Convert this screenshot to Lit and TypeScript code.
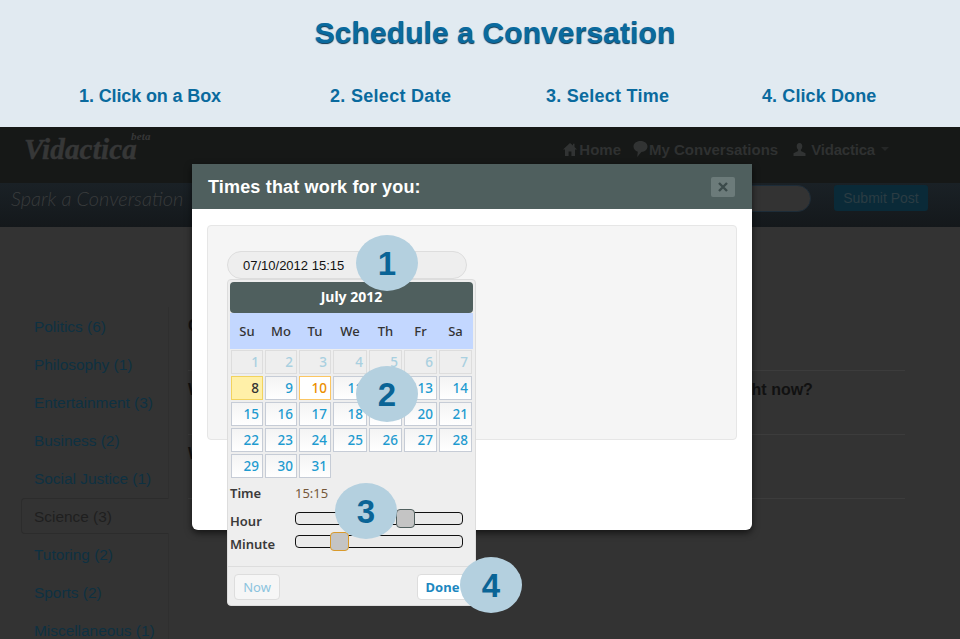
import { LitElement, html, css, svg } from "lit";
import { customElement } from "lit/decorators.js";
import { classMap } from "lit/directives/class-map.js";

const topics = [
  "Politics (6)",
  "Philosophy (1)",
  "Entertainment (3)",
  "Business (2)",
  "Social Justice (1)",
  "Science (3)",
  "Tutoring (2)",
  "Sports (2)",
  "Miscellaneous (1)",
];

const posts = [
  "Could we ever live on another planet?",
  "What do you think is the most urgent question about the world we face right now?",
  "What would you change about school?",
];

const weekdays = ["Su", "Mo", "Tu", "We", "Th", "Fr", "Sa"];

const homeIcon = svg`<path d="M7 1 0 7.5h2V14h3.6V9.5h2.8V14H12V7.5h2L11.5 5V1.8H10v1.8z" />`;
const chatIcon = svg`<path d="M7.5 0C3.4 0 .5 2.3.5 5.6c0 2.6 1.8 4.5 4.3 5.2L4.2 16l4.2-4.9c3.5-.3 6.1-2.6 6.1-5.5C14.500 2.300 11.600 0 7.500 0z" />`;
const userIcon = svg`<path d="M6.500 0C4.600 0 3.700 1.400 3.700 3.200c0 1.500.6 2.800 1.400 3.500v1.400L.5 10.200V13h12v-2.800L7.900 8.100V6.700c.8-.7 1.400-2 1.400-3.500C9.300 1.400 8.400 0 6.500 0z" />`;

@customElement("app-root")
export class AppRoot extends LitElement {
  static styles = css`
    :host {
      display: block;
      font-family: "Liberation Sans", Arial, sans-serif;
    }
    .screen {
      position: relative;
      height: 639px;
      overflow: hidden;
      background: #333;
    }

    .banner {
      height: 127px;
      box-sizing: border-box;
      background: #e1eaf1;
      color: #0a6a9e;
      padding-top: 16px;
    }
    .banner h1 {
      margin: 0;
      padding-left: 30px;
      font-size: 30px;
      line-height: 34px;
      font-weight: 700;
      letter-spacing: 0.1px;
      text-align: center;
      text-shadow: 0 1px 1px #0a3550;
    }
    .steps {
      display: grid;
      grid-template-columns: 251px 216px 216px auto;
      padding: 34px 0 0 79px;
      font-size: 18px;
      line-height: 24px;
      font-weight: 700;
    }
    .steps span:nth-child(1) {
      letter-spacing: -0.12px;
    }
    .steps span:nth-child(2) {
      letter-spacing: 0.3px;
    }
    .steps span:nth-child(3) {
      letter-spacing: 0.25px;
    }
    .steps span:nth-child(4) {
      letter-spacing: 0.1px;
    }

    .nav {
      height: 56px;
      box-sizing: border-box;
      padding-bottom: 12px;
      background: #161817;
      display: flex;
      align-items: center;
      color: #2f3131;
      font-size: 15px;
      font-weight: 700;
    }
    .logo {
      margin-left: 24px;
      font-family: "Liberation Serif", serif;
      font-size: 29px;
      font-style: italic;
      letter-spacing: 0.2px;
      color: #363737;
      -webkit-text-stroke: 0.5px #363737;
      position: relative;
    }
    .logo sup {
      position: absolute;
      left: 107px;
      top: -3px;
      font-size: 11px;
      line-height: 12px;
      -webkit-text-stroke: 0;
    }
    .links {
      margin-left: auto;
      margin-right: 71px;
      display: flex;
      align-items: center;
    }
    .links a {
      display: flex;
      align-items: center;
      margin-left: 15px;
    }
    .links svg {
      fill: #313333;
    }
    .caret {
      margin-left: 6px;
      border: 4px solid transparent;
      border-top-color: #252727;
      border-bottom: 0;
    }

    .sub {
      height: 44px;
      box-sizing: border-box;
      padding-bottom: 14px;
      background: linear-gradient(#1a2126, #14181b);
      display: flex;
      align-items: center;
    }
    .spark {
      margin-left: 11px;
      font-family: Lato, sans-serif;
      font-weight: 300;
      font-style: italic;
      font-size: 20px;
      color: #383b3c;
    }
    .search {
      margin-left: auto;
      width: 140px;
      height: 27px;
      box-sizing: border-box;
      border-radius: 14px;
      background: #333;
      border: 1px solid #1d2c38;
    }
    .submit {
      margin: 0 32px 0 23px;
      width: 94px;
      height: 26px;
      box-sizing: border-box;
      border-radius: 3px;
      background: #0a2a38;
      color: #2b3c43;
      font-size: 14px;
      line-height: 26px;
      text-align: center;
    }

    .main {
      display: flex;
      padding: 80px 55px 0 21px;
    }
    .topics {
      flex: 0 0 147px;
      height: 340px;
      border-right: 1px solid #2f2f2f;
      font-size: 15.4px;
    }
    .topic {
      height: 38px;
      box-sizing: border-box;
      padding-left: 13px;
      line-height: 39px;
      color: #0e3142;
      white-space: nowrap;
    }
    .topic.active {
      height: 36px;
      margin: 1px -1px 1px 0;
      padding-left: 12px;
      line-height: 35px;
      color: #1f1f1f;
      background: #333;
      border: 1px solid #2c2c2c;
      border-right-color: #333;
      border-radius: 4px 0 0 4px;
    }
    .posts {
      flex: 1;
      margin-left: 19px;
    }
    .post {
      height: 64px;
      box-sizing: border-box;
      border-bottom: 1px solid #3c3c3c;
      padding-top: 10px;
      font-size: 16px;
      font-weight: 700;
      line-height: 18px;
      color: #111;
      white-space: nowrap;
    }

    .modal {
      position: absolute;
      left: 192px;
      top: 164px;
      width: 560px;
      height: 366px;
      background: #fff;
      border-radius: 0 0 6px 6px;
      box-shadow: 0 3px 7px rgba(0, 0, 0, 0.6);
    }
    .modal header {
      height: 45px;
      box-sizing: border-box;
      background: #4f5f5e;
      display: flex;
      align-items: center;
      justify-content: space-between;
      padding: 0 17px 0 16px;
      color: #fff;
      font-size: 18px;
      font-weight: 700;
      letter-spacing: 0.17px;
    }
    .modal header span {
      padding-top: 2px;
    }
    .close {
      width: 24px;
      height: 20px;
      border-radius: 2px;
      background: #6c7b7a;
      display: flex;
      align-items: center;
      justify-content: center;
    }
    .well {
      margin: 16px 15px;
      height: 215px;
      box-sizing: border-box;
      background: #f5f5f5;
      border: 1px solid #e6e6e6;
      border-radius: 4px;
      padding: 25px 19px;
    }
    .field {
      width: 240px;
      height: 28px;
      box-sizing: border-box;
      border: 1px solid #ddd;
      border-radius: 14px;
      background: #eee;
      padding-left: 15px;
      font-size: 13px;
      line-height: 27px;
      color: #111;
    }

    .picker {
      position: absolute;
      left: 35px;
      top: 115px;
      width: 249px;
      height: 327px;
      box-sizing: border-box;
      padding: 2px;
      background: #eee;
      border: 1px solid #ddd;
      border-radius: 4px;
      font-family: "Noto Sans", "Open Sans", sans-serif;
    }
    .month {
      height: 31px;
      background: #4f5f5e;
      border-radius: 4px;
      color: #fff;
      font-size: 14px;
      font-weight: 700;
      line-height: 30px;
      text-align: center;
    }
    .dow {
      height: 36px;
      background: #c3d7ff;
      padding-left: 1px;
      color: #333;
      font-size: 13px;
      font-weight: 500;
      line-height: 36px;
      text-align: center;
    }
    .dow,
    .days {
      display: grid;
      grid-template-columns: 32px 32px 32px 34px 33px 33px 33px;
      column-gap: 2px;
    }
    .days {
      padding: 1px 0 0 1px;
      row-gap: 2px;
    }
    .day {
      height: 24px;
      box-sizing: border-box;
      padding-right: 3px;
      border: 1px solid #c6ccd6;
      background: linear-gradient(#f4f4f4, #fff);
      color: #1f9bd0;
      font-size: 13.5px;
      font-weight: 500;
      line-height: 22px;
      text-align: right;
    }
    .day.off {
      background: #eee;
      border-color: #ddd;
      color: #a9d0e0;
    }
    .day.today {
      background: #fff0a8;
      border-color: #f2d35e;
      color: #333;
    }
    .day.sel {
      background: #fff;
      border-color: #fbc663;
      color: #eb8f00;
    }
    .time {
      display: grid;
      grid-template-columns: 65px 168px;
      align-items: center;
      font-size: 13px;
      color: #3a3a3a;
    }
    .time b {
      font-weight: 600;
    }
    .time.now {
      margin-top: 5px;
      line-height: 20px;
    }
    .time.now span {
      color: #75583a;
      font-size: 13px;
    }
    .time.hour {
      margin-top: 6px;
      height: 23px;
    }
    .time.minute {
      height: 23px;
    }
    .track {
      position: relative;
      height: 13px;
      margin-bottom: 5px;
      box-sizing: border-box;
      border: 1px solid #111;
      border-radius: 4px;
      background: #eaeaea;
    }
    .thumb {
      position: absolute;
      top: -4px;
      width: 19px;
      height: 19px;
      box-sizing: border-box;
      border: 1px solid #51605f;
      border-radius: 4px;
      background: #c4c4c4;
    }
    .thumb.focus {
      border-color: #d99a2b;
    }
    .foot {
      margin: 11px -2px 0;
      border-top: 1px solid #ddd;
      padding: 7px 6px 0;
      display: flex;
      justify-content: space-between;
    }
    .btn {
      height: 26px;
      box-sizing: border-box;
      border: 1px solid #ddd;
      border-radius: 4px;
      background: #f6f6f6;
      font-size: 13px;
      line-height: 24px;
      text-align: center;
    }
    .btn.now {
      width: 46px;
      color: #8cc4de;
    }
    .btn.done {
      width: 61px;
      margin-right: -9px;
      padding-right: 10px;
      background: #fff;
      color: #1c87c0;
      font-weight: 700;
    }

    .mark {
      position: absolute;
      width: 62px;
      height: 56px;
      border-radius: 50%;
      background: #b4d0df;
      color: #0a6496;
      font-size: 33px;
      font-weight: 700;
      line-height: 57px;
      text-align: center;
    }
  `;

  private day(n: number) {
    return html`<div
      class=${classMap({ day: true, off: n < 8, today: n === 8, sel: n === 10 })}
    >
      ${n}
    </div>`;
  }

  private mark(n: number, x: number, y: number) {
    return html`<div class="mark" style="left:${x}px;top:${y}px">${n}</div>`;
  }

  render() {
    const days = Array.from({ length: 31 }, (_, i) => i + 1);
    return html`
      <div class="screen">
        <section class="banner">
          <h1>Schedule a Conversation</h1>
          <div class="steps">
            <span>1. Click on a Box</span>
            <span>2. Select Date</span>
            <span>3. Select Time</span>
            <span>4. Click Done</span>
          </div>
        </section>

        <nav class="nav">
          <div class="logo"><b>Vidactica</b><sup><b>beta</b></sup></div>
          <div class="links">
            <a>
              <svg width="14" height="14" viewBox="0 0 14 14">${homeIcon}</svg>
              <span style="margin-left:2px">Home</span>
            </a>
            <a style="margin-left:12px">
              <svg width="15" height="16" viewBox="0 0 15 16">${chatIcon}</svg>
              <span style="margin-left:1px">My Conversations</span>
            </a>
            <a>
              <svg width="13" height="13" viewBox="0 0 13 13">${userIcon}</svg>
              <span style="margin-left:5px;letter-spacing:-0.2px">Vidactica</span>
              <i class="caret"></i>
            </a>
          </div>
        </nav>

        <div class="sub">
          <span class="spark">Spark a Conversation</span>
          <div class="search"></div>
          <div class="submit">Submit Post</div>
        </div>

        <div class="main">
          <div class="topics">
            ${topics.map(
              (t) =>
                html`<div class=${classMap({ topic: true, active: t.startsWith("Science") })}>
                  ${t}
                </div>`
            )}
          </div>
          <div class="posts">
            ${posts.map((p) => html`<div class="post">${p}</div>`)}
          </div>
        </div>

        <div class="modal">
          <header>
            <span>Times that work for you:</span>
            <div class="close">
              <svg width="10" height="10" viewBox="0 0 10 10">
                <path d="M1 1l8 8M9 1l-8 8" stroke="#3b4a4a" stroke-width="2.400" fill="none" />
              </svg>
            </div>
          </header>
          <div class="well">
            <div class="field">07/10/2012 15:15</div>
          </div>

          <div class="picker">
            <div class="month">July 2012</div>
            <div class="dow">${weekdays.map((d) => html`<span>${d}</span>`)}</div>
            <div class="days">${days.map((n) => this.day(n))}</div>
            <div class="time now"><b>Time</b><span>15:15</span></div>
            <div class="time hour">
              <b>Hour</b>
              <div class="track"><div class="thumb" style="left:100px"></div></div>
            </div>
            <div class="time minute">
              <b>Minute</b>
              <div class="track"><div class="thumb focus" style="left:34px"></div></div>
            </div>
            <div class="foot">
              <div class="btn now">Now</div>
              <div class="btn done">Done</div>
            </div>
          </div>
        </div>

        ${this.mark(1, 356, 235)} ${this.mark(2, 356, 366)} ${this.mark(3, 335, 483)}
        ${this.mark(4, 460, 557)}
      </div>
    `;
  }
}
